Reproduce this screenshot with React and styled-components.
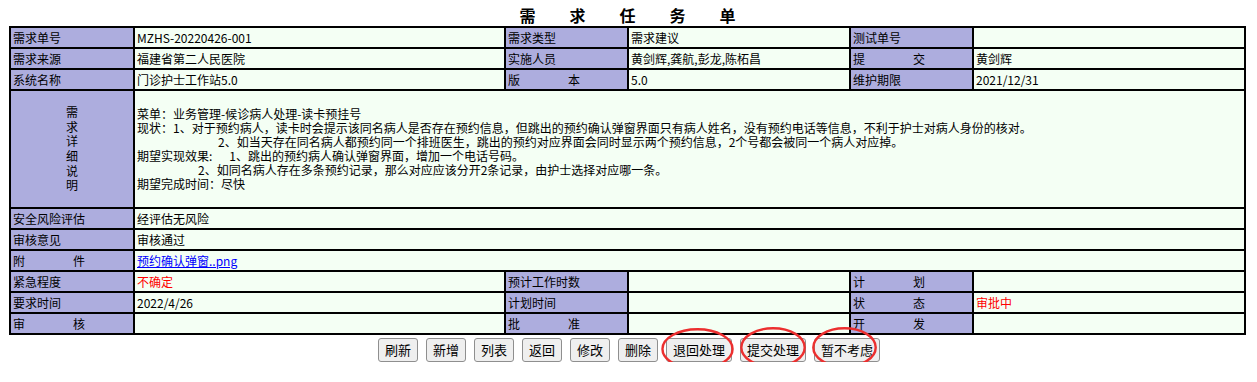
import React from "react"
import styled, { createGlobalStyle } from "styled-components"

const GlobalStyle = createGlobalStyle`
  body {
    margin: 0;
    background: #fff;
    font-family: "SimSun", "Noto Sans CJK SC", sans-serif;
    font-size: 12px;
    color: #000;
  }
`

const SP = "\u3000\u3000\u3000\u3000"

const rowsTop = [
  ["需求单号", "MZHS-20220426-001", "需求类型", "需求建议", "测试单号", ""],
  ["需求来源", "福建省第二人民医院", "实施人员", "黄剑辉,龚航,彭龙,陈柘昌", `提${SP}交`, "黄剑辉"],
  ["系统名称", "门诊护士工作站5.0", `版${SP}本`, "5.0", "维护期限", "2021/12/31"],
]

const rowsBottom = [
  ["紧急程度", { text: "不确定", red: true }, "预计工作时数", "", `计${SP}划`, ""],
  ["要求时间", "2022/4/26", "计划时间", "", `状${SP}态`, { text: "审批中", red: true }],
  [`审${SP}核`, "", `批${SP}准`, "", `开${SP}发`, ""],
]

const detailLines = [
  { indent: 0, text: "菜单：业务管理-候诊病人处理-读卡预挂号" },
  { indent: 0, text: "现状：1、对于预约病人，读卡时会提示该同名病人是否存在预约信息，但跳出的预约确认弹窗界面只有病人姓名，没有预约电话等信息，不利于护士对病人身份的核对。" },
  { indent: 81, text: "2、如当天存在同名病人都预约同一个排班医生，跳出的预约对应界面会同时显示两个预约信息，2个号都会被同一个病人对应掉。" },
  { indent: 0, text: "期望实现效果:", rest: "1、跳出的预约病人确认弹窗界面，增加一个电话号码。", gap: 17 },
  { indent: 61, text: "2、如同名病人存在多条预约记录，那么对应应该分开2条记录，由护士选择对应哪一条。" },
  { indent: 0, text: "期望完成时间：尽快" },
]

const buttons = [
  { label: "刷新" },
  { label: "新增" },
  { label: "列表" },
  { label: "返回" },
  { label: "修改" },
  { label: "删除" },
  { label: "退回处理", ring: { l: -5, r: -2, t: -10, b: 8 } },
  { label: "提交处理", ring: { l: 0, r: 0, t: -11, b: 6 } },
  { label: "暂不考虑", ring: { l: -2, r: 3, t: -11, b: 6 } },
]

const Cell = ({ value, label }) => {
  if (label) return <LabelCell>{value}</LabelCell>
  if (value && typeof value === "object")
    return (
      <ValueCell>
        <Value $red={value.red}>{value.text}</Value>
      </ValueCell>
    )
  return <ValueCell>{value}</ValueCell>
}

const SixRow = ({ row }) => (
  <tr>
    {row.map((v, i) => (
      <Cell key={i} value={v} label={i % 2 === 0} />
    ))}
  </tr>
)

const App = () => {
  return (
    <Page>
      <GlobalStyle />
      <Title>需求任务单</Title>
      <Form>
        <colgroup>
          <col style={{ width: 124 }} />
          <col style={{ width: 371 }} />
          <col style={{ width: 123 }} />
          <col style={{ width: 222 }} />
          <col style={{ width: 123 }} />
          <col style={{ width: 272 }} />
        </colgroup>
        <tbody>
          {rowsTop.map((r, i) => (
            <SixRow key={i} row={r} />
          ))}
          <tr>
            <VerticalLabel>
              {"需求详细说明".split("").map((c) => (
                <div key={c}>{c}</div>
              ))}
            </VerticalLabel>
            <DetailCell colSpan={5}>
              {detailLines.map((l, i) => (
                <Line key={i} $indent={l.indent}>
                  {l.text}
                  {l.rest && <Gap $w={l.gap} />}
                  {l.rest}
                </Line>
              ))}
            </DetailCell>
          </tr>
          <tr>
            <LabelCell>安全风险评估</LabelCell>
            <ValueCell colSpan={5}>经评估无风险</ValueCell>
          </tr>
          <tr>
            <LabelCell>审核意见</LabelCell>
            <ValueCell colSpan={5}>审核通过</ValueCell>
          </tr>
          <tr>
            <LabelCell>{`附${SP}件`}</LabelCell>
            <ValueCell colSpan={5}>
              <FileLink href="#">预约确认弹窗..png</FileLink>
            </ValueCell>
          </tr>
          {rowsBottom.map((r, i) => (
            <SixRow key={i} row={r} />
          ))}
        </tbody>
      </Form>
      <ButtonBar>
        {buttons.map((b) => (
          <ButtonWrap key={b.label}>
            <Button>{b.label}</Button>
            {b.ring && (
              <Ring
                $l={b.ring.l}
                $r={b.ring.r}
                $t={b.ring.t}
                $b={b.ring.b}
                viewBox="0 0 100 100"
                preserveAspectRatio="none"
              >
                <ellipse
                  cx="50"
                  cy="50"
                  rx="48"
                  ry="47"
                  fill="none"
                  stroke="#ec2f2f"
                  strokeWidth="2.4"
                  vectorEffect="non-scaling-stroke"
                />
              </Ring>
            )}
          </ButtonWrap>
        ))}
      </ButtonBar>
    </Page>
  )
}

export default App

const Page = styled.div`
  width: 1237px;
  margin-left: 9px;
`

const Title = styled.div`
  height: 26px;
  line-height: 30px;
  text-align: center;
  font-family: "Noto Sans CJK SC", sans-serif;
  font-size: 16px;
  font-weight: bold;
  letter-spacing: 34px;
  padding-left: 34px;
  box-sizing: border-box;
  overflow: hidden;
`

const Form = styled.table`
  width: 1237px;
  table-layout: fixed;
  border-collapse: separate;
  border-spacing: 0;
  border: 1px solid #000;
`

const BaseCell = styled.td`
  border: 1px solid #000;
  height: 19px;
  padding: 0 2px;
  font-family: "SimSun", "Noto Sans CJK SC", sans-serif;
  font-size: 12px;
  line-height: 14px;
  white-space: pre;
  overflow: hidden;
  vertical-align: middle;
`

const LabelCell = styled(BaseCell)`
  background: #adadde;
`

const ValueCell = styled(BaseCell)`
  background: #f4fff4;
`

const Value = styled.span`
  color: ${(p) => (p.$red ? "#ff0000" : "#000")};
`

const VerticalLabel = styled(LabelCell)`
  height: 116px;
  text-align: center;
  line-height: 14.6px;
`

const DetailCell = styled(ValueCell)`
  height: 116px;
  white-space: nowrap;
`

const Line = styled.div`
  padding-left: ${(p) => p.$indent}px;
  line-height: 14px;
`

const Gap = styled.span`
  display: inline-block;
  width: ${(p) => p.$w}px;
`

const FileLink = styled.a`
  color: #0000ff;
  text-decoration: underline;
`

const ButtonBar = styled.div`
  display: flex;
  justify-content: center;
  gap: 8px;
  margin-top: 3px;
  padding-left: 3px;
`

const ButtonWrap = styled.span`
  position: relative;
  display: inline-flex;
`

const Button = styled.button`
  height: 24px;
  padding: 0 6px;
  font-family: "Noto Sans CJK SC", sans-serif;
  font-size: 13px;
  line-height: 20px;
  color: #000;
  background: #efefef;
  border: 1px solid #8f8f8f;
  border-radius: 3px;
`

const Ring = styled.svg`
  position: absolute;
  left: ${(p) => p.$l}px;
  right: ${(p) => p.$r}px;
  top: ${(p) => p.$t}px;
  bottom: ${(p) => -p.$b}px;
  width: calc(100% - ${(p) => p.$l + p.$r}px);
  height: calc(100% - ${(p) => p.$t - p.$b}px);
  overflow: visible;
  pointer-events: none;
`
